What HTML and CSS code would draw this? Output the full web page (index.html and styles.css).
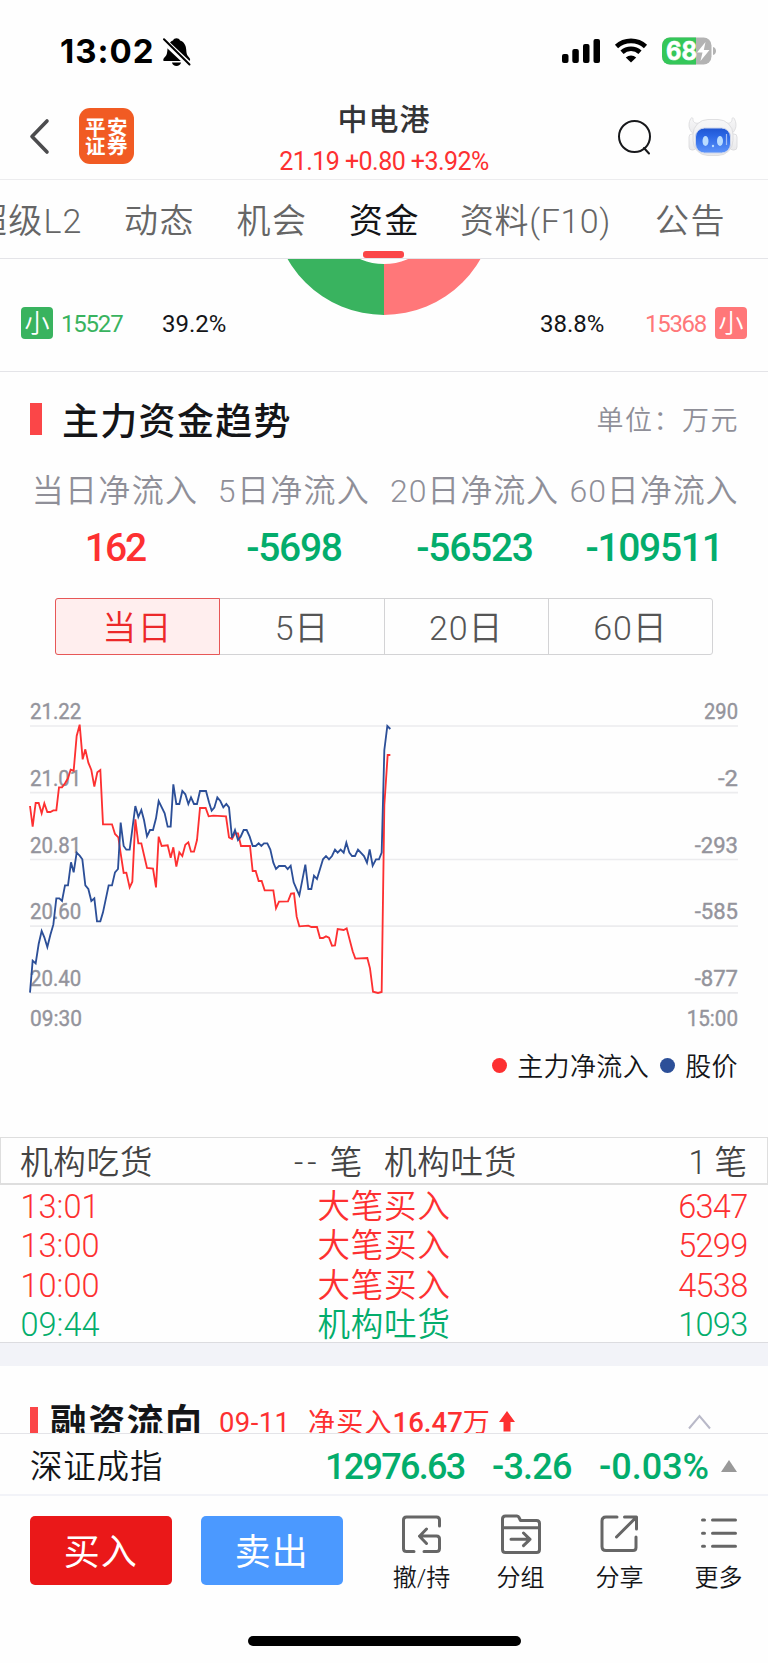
FILE: index.html
```html
<!DOCTYPE html>
<html lang="zh-CN">
<head>
<meta charset="utf-8">
<title>中电港 资金</title>
<link rel="stylesheet" href="styles.css">
</head>
<body>
<div class="app">
  <header class="status">
    <span class="clock">13:02</span>
    <svg class="bell" width="30" height="32" viewBox="0 0 30 32">
      <path d="M2 24C1 24 1 22 2 21c3-3 3-4 3.500-9C6 7 9 4 11 3.500 12 0.500 17 0.500 18 3.500c4 1 6 5 6.200 9 .3 5 1 6 3.300 8.500 1 1 .8 3-.5 3zM10 25.500h9c-.5 4.500-8.500 4.500-9 0z"/>
      <path class="cut" d="M1.500 3.500 28 28.500"/>
      <path class="slash" d="M2 2.200 27.500 27.500"/>
    </svg>
    <svg class="signal" width="40" height="26" viewBox="0 0 40 26">
      <rect x="1" y="16" width="6.500" height="9" rx="2"/><rect x="11.300" y="11" width="6.500" height="14" rx="2"/><rect x="22" y="6" width="6.500" height="19" rx="2"/><rect x="32.500" y="1" width="6.500" height="24" rx="2"/>
    </svg>
    <svg class="wifi" width="34" height="26" viewBox="0 0 34 26">
      <path class="arc" d="M2.500 8.500C10.500 1 23.500 1 31.500 8.500M8 14.200c5-4.700 13-4.700 18 0"/>
      <path d="M17 24.500 11.800 19.500c3-2.800 7.400-2.800 10.400 0z"/>
    </svg>
    <svg class="battery" width="56" height="28" viewBox="0 0 56 28">
      <defs><clipPath id="cell"><rect x="0" y=".5" width="49.500" height="27" rx="8"/></clipPath></defs>
      <g clip-path="url(#cell)"><rect width="50" height="28" fill="#b3b3b3"/><rect width="34" height="28" fill="#34c759"/></g>
      <path d="M51 10c4 1 4 7 0 8z" fill="#b3b3b3"/>
      <text x="4" y="23" textLength="31" lengthAdjust="spacingAndGlyphs">68</text>
      <path d="M43.500 5 35 15.500h5.500L38.500 24l9-11h-5.700z" fill="#fff"/>
    </svg>
  </header>

  <nav class="nav">
    <svg class="back" width="22" height="38" viewBox="0 0 22 38"><path d="M18 3 3 18.500 18 34"/></svg>
    <div class="logo"><span>平安</span><span>证券</span></div>
    <div class="stock">
      <div class="name">中电港</div>
      <div class="quote">21.19 +0.80 +3.92%</div>
    </div>
    <svg class="search" width="36" height="38" viewBox="0 0 36 38"><circle cx="17.500" cy="18.500" r="15.500"/><path d="m27 30 5 5.500"/></svg>
    <svg class="robot" width="50" height="40" viewBox="0 0 50 40">
      <defs>
        <linearGradient id="shell" x1="0" y1="0" x2="0" y2="1"><stop offset="0" stop-color="#f7f7f8"/><stop offset="1" stop-color="#e9e9eb"/></linearGradient>
        <linearGradient id="face" x1="0" y1="0" x2="0" y2="1"><stop offset="0" stop-color="#1f55d2"/><stop offset=".3" stop-color="#2a66e4"/><stop offset="1" stop-color="#5c93fa"/></linearGradient>
      </defs>
      <path class="shell" d="M2.500 2C-1 9 2 15 7 18l5-12C7 7 5 5 5 2.500c0-2-1.500-2.500-2.500-.5zM46.500 2c3.500 7 .5 13-4.500 16L37 6c5 1 7-1 7-3.500 0-2 1.500-2.500 2.500-.5z"/>
      <rect class="shell" x="1" y="17" width="7" height="16" rx="3"/><rect class="shell" x="42" y="17" width="7" height="16" rx="3"/>
      <rect class="shell" x="5" y="2.500" width="40" height="36" rx="15"/>
      <rect x="7.500" y="11" width="35" height="25" rx="9" fill="url(#face)" stroke="#cdd6ec"/>
      <ellipse cx="17.500" cy="24" rx="3" ry="5" fill="#b9dcff"/><ellipse cx="32" cy="24" rx="3" ry="5" fill="#b9dcff"/>
      <circle cx="25" cy="29" r="1.200" fill="#b9dcff"/><path d="M38.500 17v11" stroke="#a5bdf3" stroke-width="1.200"/>
    </svg>
  </nav>

  <nav class="tabs">
    <span class="tab t0">超级L2</span><span class="tab t1">动态</span><span class="tab t2">机会</span><span class="tab t3 on">资金</span><span class="tab t4">资料(F10)</span><span class="tab t5">公告</span>
  </nav>

  <section class="pie">
    <svg class="donut" width="200" height="57" viewBox="284 259 200 57">
      <path d="M384 315A111 111 0 0 1 273 204H324A60 60 0 0 0 384 264z" fill="#39b35f"/>
      <path d="M384 315A111 111 0 0 0 495 204H444A60 60 0 0 1 384 264z" fill="#ff7779"/>
    </svg>
    <div class="pierow">
      <span class="badge green">小</span><span class="num gtext">15527</span><span class="num pct1">39.2%</span>
      <span class="num pct2">38.8%</span><span class="num rtext">15368</span><span class="badge pink">小</span>
    </div>
  </section>

  <section class="trend">
    <div class="head"><i class="mark"></i><h2>主力资金趋势</h2><span class="unit">单位：万元</span></div>
    <div class="flows">
      <div class="flow f1"><span>当日净流入</span><b class="up">162</b></div>
      <div class="flow f2"><span>5日净流入</span><b>-5698</b></div>
      <div class="flow f3"><span>20日净流入</span><b>-56523</b></div>
      <div class="flow f4"><span>60日净流入</span><b>-109511</b></div>
    </div>
    <div class="seg"><span class="sel">当日</span><span>5日</span><span>20日</span><span>60日</span></div>
    <svg class="chart" width="768" height="350" viewBox="-60 0 2304 1050">
      <path class="grid" d="M30 108H2154M30 308H2154M30 508.500H2154M30 708.500H2154M30 908.500H2154"/>
      <g class="axis">
        <text x="30" y="88" textLength="154" lengthAdjust="spacingAndGlyphs">21.22</text>
        <text x="30" y="288" textLength="154" lengthAdjust="spacingAndGlyphs">21.01</text>
        <text x="30" y="488" textLength="154" lengthAdjust="spacingAndGlyphs">20.81</text>
        <text x="30" y="688" textLength="154" lengthAdjust="spacingAndGlyphs">20.60</text>
        <text x="30" y="888" textLength="154" lengthAdjust="spacingAndGlyphs">20.40</text>
        <text x="30" y="1008" textLength="156" lengthAdjust="spacingAndGlyphs">09:30</text>
        <text x="2052" y="88" textLength="102" lengthAdjust="spacingAndGlyphs">290</text>
        <text x="2094" y="288" textLength="60" lengthAdjust="spacingAndGlyphs">-2</text>
        <text x="2024" y="488" textLength="130" lengthAdjust="spacingAndGlyphs">-293</text>
        <text x="2024" y="688" textLength="130" lengthAdjust="spacingAndGlyphs">-585</text>
        <text x="2024" y="888" textLength="130" lengthAdjust="spacingAndGlyphs">-877</text>
        <text x="2000" y="1008" textLength="154" lengthAdjust="spacingAndGlyphs">15:00</text>
      </g>
      <polyline class="net" points="30,348 38,410 47,339 56,339 65,370 73,340 82,366 91,366 100,361 109,361 117,292 126,292 135,280 144,265 152,239 161,242 170,138 179,104 188,208 196,178 205,218 214,240 223,290 232,247 241,240 249,403 276,403 285,432 295,442 302,490 311,549 319,548 329,592 337,575 346,388 355,460 364,460 372,495 381,534 399,536 408,592 416,440 425,468 443,466 452,503 460,472 469,530 478,487 487,498 496,464 505,457 513,485 522,485 531,450 540,354 557,354 566,379 580,377 618,379 627,442 636,447 645,430 654,430 663,468 690,468 698,543 707,543 716,573 725,573 734,601 760,601 768,655 777,635 804,634 813,611 822,610 830,680 838,709 865,707 874,711 891,711 900,744 909,744 918,739 927,743 936,767 945,766 953,717 971,720 980,715 998,784 1006,806 1042,804 1050,835 1059,905 1074,909 1085,906 1093,345 1103,195 1111,195"/>
      <polyline class="price" points="30,908 38,812 47,820 56,762 65,723 73,742 82,771 91,735 100,704 109,625 118,625 126,633 135,586 144,586 153,517 161,547 170,488 179,497 187,508 196,586 205,597 214,633 223,625 231,694 241,694 249,667 266,586 276,586 285,547 294,537 302,398 311,468 319,479 329,479 346,348 355,381 364,360 372,390 381,439 390,420 399,420 408,385 416,333 434,370 443,410 452,410 460,283 469,342 478,342 487,303 496,313 505,342 513,322 522,342 531,342 540,303 558,303 567,337 575,362 583,353 592,322 601,333 610,352 619,342 627,352 636,444 645,420 654,450 662,440 671,420 680,420 689,440 698,468 707,468 716,460 724,468 732,460 742,460 751,479 760,518 768,537 777,528 795,528 803,537 812,527 821,577 830,598 838,616 856,524 865,597 874,597 882,557 891,567 909,508 918,498 927,508 936,498 945,479 953,488 962,479 971,488 979,458 988,488 996,498 1005,498 1014,479 1032,498 1041,518 1049,478 1058,527 1068,508 1077,508 1085,488 1093,180 1102,108 1111,117"/>
    </svg>
    <div class="legend"><i class="ld red"></i><span>主力净流入</span><i class="ld blue"></i><span>股价</span></div>
  </section>

  <section class="orders">
    <div class="ohead"><span class="oa">机构吃货</span><span class="ob"><span class="dash">--</span>笔</span><span class="oc">机构吐货</span><span class="od">1 笔</span></div>
    <div class="orow"><time>13:01</time><span>大笔买入</span><b>6347</b></div>
    <div class="orow"><time>13:00</time><span>大笔买入</span><b>5299</b></div>
    <div class="orow"><time>10:00</time><span>大笔买入</span><b>4538</b></div>
    <div class="orow sell"><time>09:44</time><span>机构吐货</span><b>1093</b></div>
  </section>

  <section class="margin">
    <i class="mark"></i><h2>融资流向</h2><span class="date">09-11</span><span class="buy">净买入<em>16.47</em>万</span>
    <svg class="arrow" width="16" height="21" viewBox="0 0 16 21"><path d="M8 0 16 11H11.500V20.500H4.500V11H0z"/></svg>
    <svg class="chev" width="23" height="16" viewBox="0 0 23 16"><path d="M1 14.500 11.500 2 22 14.500"/></svg>
  </section>

  <section class="index">
    <span class="iname">深证成指</span><span class="iv i1">12976.63</span><span class="iv i2">-3.26</span><span class="iv i3">-0.03%</span><i class="tri"></i>
  </section>

  <footer class="actions">
    <button class="buybtn">买入</button><button class="sellbtn">卖出</button>
    <div class="act a1">
      <svg width="40" height="40" viewBox="0 0 40 40"><path d="M37.500 11V5q0-3-3-3H4.500q-3 0-3 3v28.500q0 3 3 3H12M22 36.500h12.500q3 0 3-3V24q0-3-3-3H17.500M24.500 14 17.500 21.200 24.500 28.500"/></svg>
      <span>撤/持</span></div>
    <div class="act a2">
      <svg width="40" height="40" viewBox="0 0 40 40"><path d="M1.500 35V4q0-3 3-3H16q1.500 0 2 1.500L19.500 5.500H35.500q3 0 3 3V34.500q0 3-3 3H4.500q-3 0-3-3zM1.500 12.800h37M10 24.300H29M22.500 18l6.500 6.300-6.500 6.300"/></svg>
      <span>分组</span></div>
    <div class="act a3">
      <svg width="40" height="40" viewBox="0 0 40 40"><path d="M17 2H6Q2 2 2 6v25.500q0 4 4 4h27q3 0 3-3V22M24.500 2H36.500V14M36 2.500 16.500 22"/></svg>
      <span>分享</span></div>
    <div class="act a4">
      <svg width="40" height="40" viewBox="0 0 40 40"><path d="M13.500 5h23M13.500 18.200h23M13.500 31.300h23M3.500 5h2M3.500 18.200h2M3.500 31.300h2"/></svg>
      <span>更多</span></div>
  </footer>
  <div class="home"></div>
</div>
</body>
</html>
```
FILE: styles.css
```css
* { box-sizing: border-box; margin: 0; padding: 0; }
body { background: #fefefe; font-family: Roboto, "Noto Sans CJK SC", sans-serif; color: #141518; }
.app { width: 768px; height: 1663px; overflow: hidden; display: flex; flex-direction: column; }
.app > * { flex: none; }
span, h2, b, time, em { white-space: nowrap; font-style: normal; }
svg { display: block; flex: none; overflow: visible; }

.status { height: 104px; display: flex; align-items: flex-start; padding: 37px 0 0 60px; color: #000; }
.clock { font: 700 33px/28px Inter, sans-serif; width: 102px; letter-spacing: 1px; }
.bell .cut { stroke: #fefefe; stroke-width: 6; fill: none; }
.bell .slash { stroke: #000; stroke-width: 2; fill: none; stroke-linecap: round; }
.signal { margin: 1px 0 0 369px; }
.wifi { margin: 1px 0 0 13px; }
.wifi .arc { fill: none; stroke: #000; stroke-width: 4.6; }
.battery { margin: 0 0 0 14px; }
.battery text { font: 700 25px Inter, sans-serif; fill: #fff; stroke: #fff; stroke-width: .6px; }

.nav { height: 76px; border-bottom: 1px solid #ececee; display: flex; align-items: flex-start; }
.back { margin: 14px 0 0 29px; }
.back path { fill: none; stroke: #4c4c4e; stroke-width: 3.6; stroke-linecap: round; stroke-linejoin: round; }
.logo { width: 55px; height: 56px; margin: 4px 0 0 28px; border-radius: 11px; background: #f15b23; color: #fff; display: flex; flex-direction: column; align-items: center; padding-top: 9px; font: 700 20.500px/19px "Noto Sans CJK SC", sans-serif; letter-spacing: 1.500px; text-indent: 1px; }
.stock { width: 260px; margin-left: 120px; text-align: center; }
.name { font-size: 30px; line-height: 32px; letter-spacing: 1px; font-weight: 500; color: #333436; }
.quote { font-size: 25px; line-height: 30px; margin-top: 11px; color: #fd3031; white-space: pre; letter-spacing: -.55px; }
.search { margin: 14px 0 0 103px; }
.search * { fill: none; stroke: #17181b; stroke-width: 2; stroke-linecap: round; }
.robot { margin: 13px 0 0 35px; }
.robot .shell { fill: url(#shell); stroke: #d8d8da; stroke-width: .8; }

.tabs { height: 79px; border-bottom: 1px solid #e4e4e8; display: flex; align-items: center; padding-top: 3px; position: relative; font-size: 34px; line-height: 40px; letter-spacing: 1.600px; font-weight: 350; color: #666; }
.tab { position: relative; flex: none; }
.t0 { width: 151px; margin-left: -27px; letter-spacing: 1.200px; }
.t1, .t2 { width: 112.500px; }
.t3 { width: 111px; }
.t4 { width: 195px; letter-spacing: .6px; }
.t5 { width: 110px; }
.on { color: #141518; font-weight: 400; }
.on::after { content: ""; position: absolute; left: 13.500px; bottom: -17px; width: 41px; height: 7px; border-radius: 3px; background: #fb4648; }

.pie { height: 113px; border-bottom: 1px solid #e4e4e8; display: flex; flex-direction: column; }
.donut { align-self: center; height: 57px; margin-bottom: -9px; overflow: hidden; }
.pierow { height: 32px; display: flex; align-items: center; padding: 0 21px; }
.badge { width: 32px; height: 32px; border-radius: 4px; color: #fff; text-align: center; font-size: 25px; line-height: 33px; font-weight: 350; }
.green { background: #39b35f; }
.pink { background: #ff7779; }
.num { font-size: 24px; line-height: 32px; letter-spacing: 0; padding-top: 2px; }
.gtext { color: #39b35f; margin-left: 8px; width: 101px; letter-spacing: -1.200px; }
.pct1 { width: 378px; }
.pct2 { width: 105px; }
.rtext { color: #ff7779; width: 70px; letter-spacing: -1.300px; }

.trend { height: 765px; }
.head { display: flex; padding: 31px 29px 0 30px; height: 71px; }
.mark { width: 12px; height: 32px; background: #fb4648; flex: none; }
.head h2 { margin: -6px 0 0 20px; font-size: 37px; line-height: 52px; font-weight: 500; letter-spacing: 1.300px; }
.unit { margin-left: auto; font-size: 27px; line-height: 37px; font-weight: 350; letter-spacing: 1.500px; color: #8f8f98; }
.flows { display: flex; height: 155px; padding-left: 31px; }
.flow { display: flex; flex-direction: column; align-items: center; font-size: 32px; line-height: 40px; letter-spacing: 1.300px; font-weight: 350; color: #8f8f98; padding-top: 28px; }
.flow b { font-size: 39px; line-height: 40px; margin-top: 17px; font-weight: 500; color: #03ad6c; letter-spacing: -1.300px; }
.flow b.up { color: #fd3031; letter-spacing: -2px; }
.f1 { width: 168px; }
.f2 { width: 190px; }
.f3 { width: 171px; letter-spacing: .9px; }
.f4 { width: 188px; letter-spacing: .9px; }
.seg { width: 658px; height: 57px; margin-left: 55px; display: flex; border: 1px solid #d3d3d5; border-radius: 3px; }
.seg span { flex: 1; border-left: 1px solid #d3d3d5; text-align: center; font-size: 34px; line-height: 59px; letter-spacing: .8px; font-weight: 350; color: #555; }
.seg .sel { margin: -1px 0 -1px -1px; border: 1px solid #e75757; background: #ffeeee; color: #ec2829; border-radius: 3px 0 0 3px; line-height: 59px; letter-spacing: 1.500px; }
.seg .sel + span { border-left: 0; }
.chart { margin-top: 35px; }
.grid { stroke: #ececee; stroke-width: 5; fill: none; }
.axis { font-size: 65px; fill: #94949c; font-weight: 400; stroke: #94949c; stroke-width: 1.200px; }
.net, .price { fill: none; stroke-width: 5.500; stroke-linejoin: miter; }
.net { stroke: #fd3031; }
.price { stroke: #2c4f98; }
.legend { display: flex; align-items: center; justify-content: flex-end; padding-right: 30px; height: 36px; margin-top: 9px; font-size: 26px; line-height: 36px; letter-spacing: .4px; font-weight: 350; }
.ld { width: 15px; height: 15px; border-radius: 50%; margin: 0 10px 3px 11px; }
.red { background: #fd3031; }
.blue { background: #2c4f98; }

.orders { height: 229px; border-bottom: 24px solid #f2f3f8; background: #fefefe; font-size: 32.500px; letter-spacing: .8px; font-weight: 350; }
.ohead { height: 48px; border: 1px solid #dedede; border-bottom-width: 2px; display: flex; padding: 0 20px 0 19px; line-height: 51px; color: #444; }
.oa { width: 274px; }
.ob { width: 90px; }
.dash { letter-spacing: 4px; margin-right: 9px; }
.oc { width: 200px; }
.od { margin-left: auto; letter-spacing: 0; }
.orow { display: grid; grid-template-columns: 297px 1fr 110px; height: 39.400px; padding: 0 20.500px 0 20.500px; line-height: 45px; color: #fd3031; }
.orow b { font-weight: 350; text-align: right; letter-spacing: -.7px; }
.orow time { letter-spacing: 0; }
.orow:last-child { border-bottom: 1px solid #dcdce0; }
.sell { color: #03ad6c; }

.margin { height: 68px; overflow: hidden; border-bottom: 1px solid #e4e4e8; display: flex; align-items: flex-start; padding-left: 30px; color: #fd3031; }
.margin .mark { width: 8px; margin-top: 41px; }
.margin h2 { width: 169px; margin: 32px 0 0 12px; font-size: 37px; line-height: 52px; font-weight: 700; letter-spacing: 1.300px; color: #141518; }
.date, .buy { font-size: 27.500px; line-height: 36px; margin-top: 39px; }
.date { width: 89px; letter-spacing: .4px; }
.buy { width: 191px; font-size: 27px; letter-spacing: 1.200px; }
.buy em { font-weight: 500; font-size: 27.500px; letter-spacing: 0; }
.arrow { margin-top: 45px; fill: #fd3031; }
.chev { margin: 48px 0 0 173px; }
.chev path { fill: none; stroke: #b9b9c8; stroke-width: 2; }

.index { height: 62px; border-bottom: 2px solid #f2f3f8; display: flex; align-items: center; padding: 3px 0 0 30px; }
.iname { width: 295px; font-size: 32.500px; line-height: 40px; letter-spacing: .8px; font-weight: 350; padding-top: 2px; }
.iv { font-size: 36px; line-height: 40px; font-weight: 500; color: #03ad6c; letter-spacing: -1.700px; padding-top: 3px; }
.i1 { width: 167px; }
.i2 { width: 107px; letter-spacing: -.8px; }
.i3 { width: 122px; letter-spacing: 0; }
.tri { border: 8.500px solid transparent; border-top: 0; border-bottom: 12px solid #999; }

.actions { height: 140px; display: flex; align-items: flex-start; padding: 20px 0 0 30px; }
button { border: 0; width: 141.500px; height: 69px; border-radius: 5px; color: #fff; font: 400 36px/75px Roboto, "Noto Sans CJK SC", sans-serif; letter-spacing: 1px; flex: none; }
.buybtn { background: #ea1819; }
.sellbtn { background: #4b99ff; margin-left: 29.500px; }
.act { width: 99px; display: flex; flex-direction: column; align-items: center; font-size: 24px; line-height: 34px; font-weight: 350; flex: none; }
.a1 { margin-left: 29.500px; }
.act svg { margin-bottom: 6px; margin-top: -1px; }
.act path { fill: none; stroke: #666; stroke-width: 3; stroke-linecap: round; stroke-linejoin: round; }
.home { width: 273px; height: 10px; border-radius: 5px; background: #000; margin: 0 0 0 248px; }
```
